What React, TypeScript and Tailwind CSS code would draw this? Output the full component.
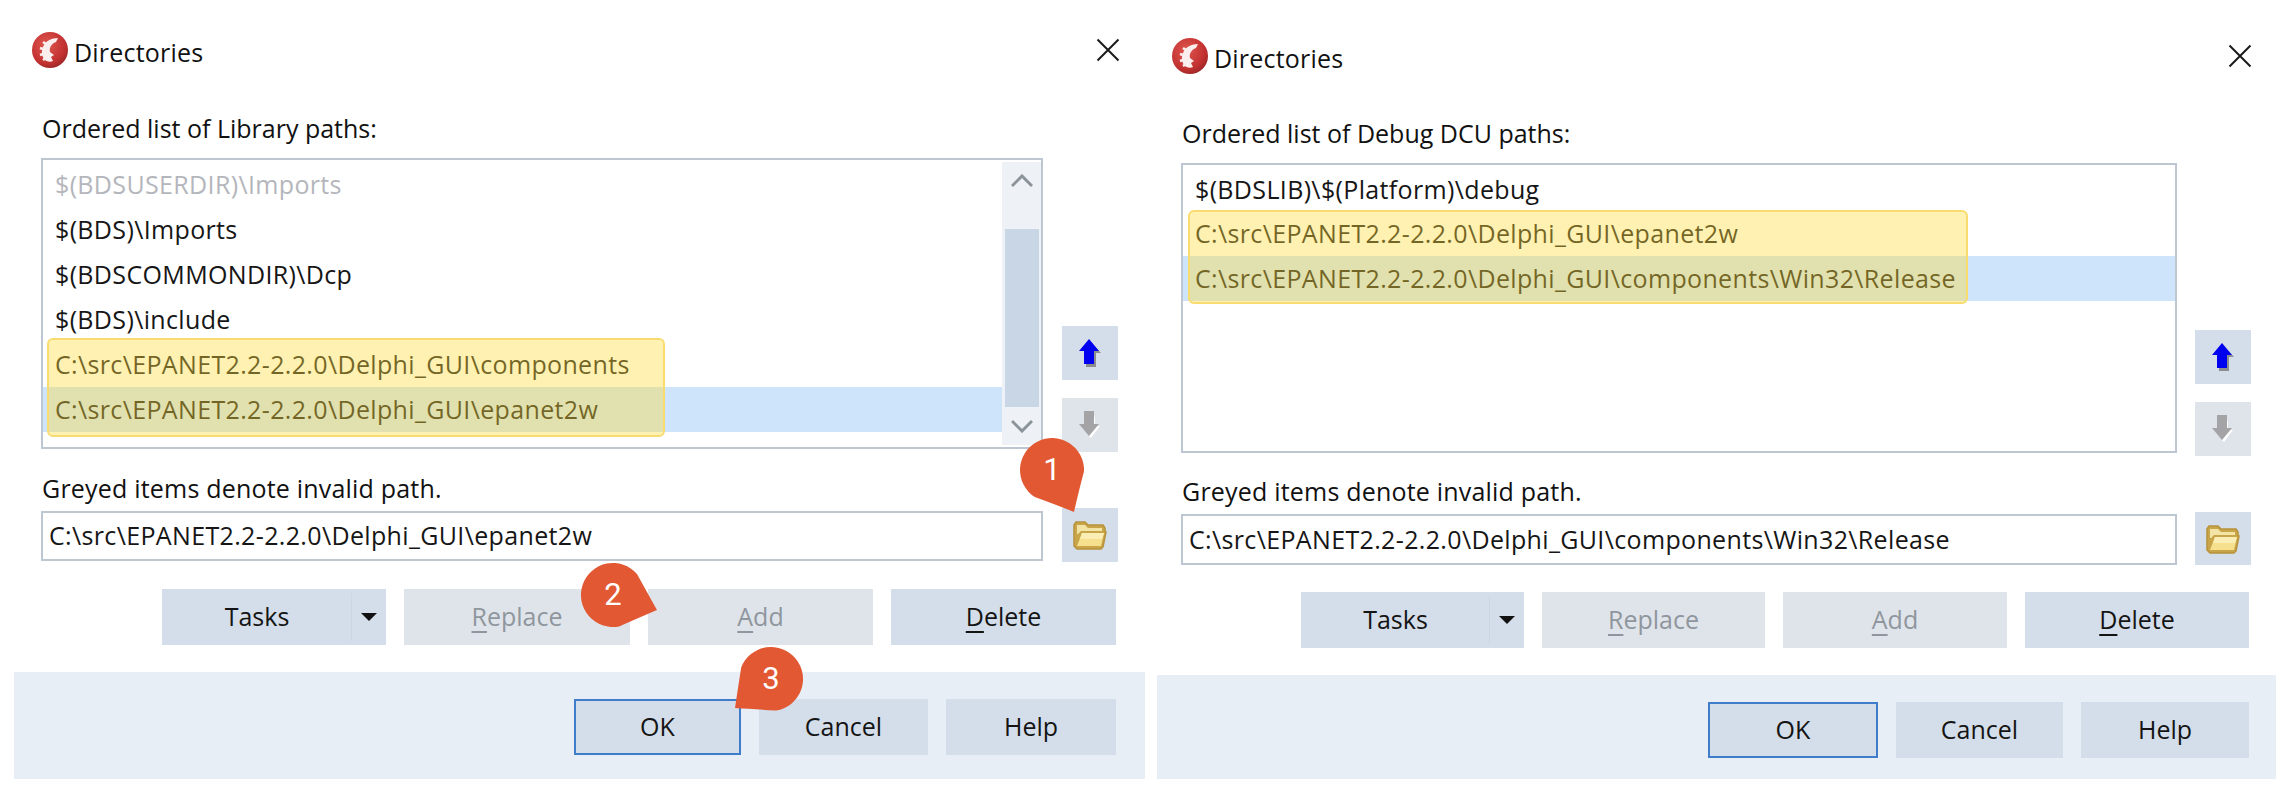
import type { ReactNode } from "react";

const FONT = "font-['Open_Sans','Liberation_Sans',sans-serif]";

// Spartan helmet logo, roughly
function Logo() {
  return (
    <svg width="36" height="36" viewBox="0 0 36 36">
      <defs>
        <radialGradient id="helmetBg" cx="0.4" cy="0.35" r="0.75">
          <stop offset="0" stopColor="#e0564f" />
          <stop offset="0.7" stopColor="#c0302f" />
          <stop offset="1" stopColor="#8e2226" />
        </radialGradient>
      </defs>
      <circle cx="18" cy="18" r="18" fill="url(#helmetBg)" />
      <path
        d="M26 6 C20 6 13 9 11 15 C9 20 10 25 13 28 C15 30 19 30 21 29 L19 25 L22 23 L18 20 C17 16 19 12 24 10 Z"
        fill="#fbeeee"
      />
      <path d="M14 12 L11 10 M11 17 L8 16 M11 22 L8 23 M14 26 L11 28" stroke="#fbeeee" strokeWidth="2.5" />
    </svg>
  );
}

function CloseIcon() {
  return (
    <svg width="24" height="24" viewBox="0 0 24 24" stroke="#1a1a1a" strokeWidth="2">
      <path d="M1.5 1.5 L22.5 22.5 M22.5 1.5 L1.5 22.5" />
    </svg>
  );
}

function Chevron({ down }: { down?: boolean }) {
  return (
    <svg width="22" height="14" viewBox="0 0 22 14" fill="none" stroke="#8b939b" strokeWidth="3">
      <path d={down ? "M1 2 L11 12 L21 2" : "M1 12 L11 2 L21 12"} />
    </svg>
  );
}

function ArrowUp() {
  return (
    <svg width="24" height="28" viewBox="0 0 24 28">
      <path d="M13 3 L23 14 L18 14 L18 28 L8 28 L8 14 Z" fill="#8d8d8d" />
      <path d="M11 0 L21 12 L16 12 L16 25 L6 25 L6 12 L1 12 Z" fill="#0000f0" />
    </svg>
  );
}

function ArrowDown() {
  return (
    <svg width="24" height="28" viewBox="0 0 24 28">
      <path d="M17 4 L17 15 L22 15 L13 27 L11 25 Z" fill="#ffffff" />
      <path d="M6 0 L16 0 L16 13 L21 13 L11 25 L1 13 L6 13 Z" fill="#a4a4a6" />
    </svg>
  );
}

function FolderIcon() {
  return (
    <svg width="34" height="30" viewBox="0 0 34 30">
      <path
        d="M1 5 L3 2 L12 2 L15 5 L30 5 L32 8 L32 11 L33 12 L30 27 L28 29 L4 29 L1 26 Z"
        fill="#c9a54a"
        stroke="#b8923a"
        strokeWidth="1.5"
      />
      <path d="M4 5 L12 5 L15 8 L29 8 L29 11 L8 11 L5 14 L4 14 Z" fill="#f3e3a4" />
      <path d="M9 13 L31 13 L28 26 L4 26 Z" fill="#f6e08e" />
      <path d="M9 13 L31 13 L29 19 L7 19 Z" fill="#fbeeb4" />
    </svg>
  );
}

function Caret() {
  return (
    <svg width="16" height="8" viewBox="0 0 16 8" className="block">
      <path d="M0 0 L16 0 L8 8 Z" fill="#111" />
    </svg>
  );
}

// Callout marker, tail computed from the direction of the tip
function Badge({
  n,
  tipX,
  tipY,
  className,
}: {
  n: number;
  tipX: number;
  tipY: number;
  className: string;
}) {
  const r = 32;
  const cx = 48;
  const cy = 48;
  const a = Math.atan2(tipY, tipX);
  const pt = (ang: number, rad: number) =>
    `${(cx + Math.cos(ang) * rad).toFixed(1)} ${(cy + Math.sin(ang) * rad).toFixed(1)}`;
  const d = `M${pt(a + 1.05, r)} A${r} ${r} 0 1 1 ${pt(a - 1.05, r)} Q${pt(a - 0.32, r * 1.12)} ${cx + tipX} ${cy + tipY} Q${pt(a + 0.32, r * 1.12)} ${pt(a + 1.05, r)} Z`;
  return (
    <div className={`absolute h-[96px] w-[96px] ${className}`}>
      <svg width="96" height="96" viewBox="0 0 96 96" className="absolute inset-0">
        <path d={d} fill="#e25833" />
      </svg>
      <span className="absolute left-[16px] top-[16px] flex h-[64px] w-[64px] items-center justify-center font-['Roboto',sans-serif] text-[31px] text-white">
        {n}
      </span>
    </div>
  );
}

function Btn({
  className,
  disabled,
  children,
}: {
  className: string;
  disabled?: boolean;
  children: ReactNode;
}) {
  return (
    <div
      className={`flex h-[56px] items-center justify-center text-[25px] ${
        disabled ? "bg-[#dfe4ea] text-[#8f969e]" : "bg-[#d4deea] text-[#141414]"
      } ${className}`}
    >
      {children}
    </div>
  );
}

interface DialogConfig {
  root: string;
  titleRow: string;
  labelMt: string;
  bodyRow: string;
  listBox: string;
  rowH: string;
  side: string;
  greyMt: string;
  inputRow: string;
  inputBox: string;
  folderBtn: string;
  actions: string;
  footer: string;
  widths: string[];
  footWidths: string[];
  label: string;
  rows: { text: string; grey?: boolean; selected?: boolean }[];
  highlight: string;
  scrollbar?: boolean;
  inputValue: string;
}

const LEFT: DialogConfig = {
  root: "w-[1131px] pt-[32px]",
  titleRow: "pl-[18px] pr-[25px]",
  labelMt: "mt-[44px] pl-[28px]",
  bodyRow: "mt-[14px] h-[294px] gap-[19px] pl-[27px]",
  listBox: "h-[291px] w-[1002px] pt-[2px]",
  rowH: "h-[45px]",
  side: "pt-[168px]",
  greyMt: "mt-[20px] pl-[28px]",
  inputRow: "mt-[4px] h-[54px] gap-[19px] pl-[27px]",
  inputBox: "mt-[3px] h-[50px] w-[1002px]",
  folderBtn: "h-[54px]",
  actions: "pr-[29px]",
  footer: "h-[107px] pr-[29px]",
  widths: ["w-[224px]", "w-[226px]", "w-[225px]", "w-[225px]"],
  footWidths: ["w-[167px]", "w-[169px]", "w-[170px]"],
  label: "Ordered list of Library paths:",
  rows: [
    { text: "$(BDSUSERDIR)\\Imports", grey: true },
    { text: "$(BDS)\\Imports" },
    { text: "$(BDSCOMMONDIR)\\Dcp" },
    { text: "$(BDS)\\include" },
    { text: "C:\\src\\EPANET2.2-2.2.0\\Delphi_GUI\\components" },
    { text: "C:\\src\\EPANET2.2-2.2.0\\Delphi_GUI\\epanet2w", selected: true },
  ],
  highlight: "left-[4px] top-[178px] h-[99px] w-[618px]",
  scrollbar: true,
  inputValue: "C:\\src\\EPANET2.2-2.2.0\\Delphi_GUI\\epanet2w",
};

const RIGHT: DialogConfig = {
  root: "w-[1119px] pt-[38px]",
  titleRow: "pl-[15px] pr-[24px]",
  labelMt: "mt-[43px] pl-[25px]",
  bodyRow: "mt-[14px] h-[293px] gap-[18px] pl-[24px]",
  listBox: "h-[290px] w-[996px] pt-[2px]",
  rowH: "h-[44.5px]",
  side: "pt-[167px]",
  greyMt: "mt-[19px] pl-[25px]",
  inputRow: "mt-[5px] h-[53px] gap-[18px] pl-[24px]",
  inputBox: "mt-[2px] h-[51px] w-[996px]",
  folderBtn: "h-[53px]",
  actions: "pr-[27px]",
  footer: "h-[104px] pr-[27px]",
  widths: ["w-[223px]", "w-[223px]", "w-[224px]", "w-[224px]"],
  footWidths: ["w-[170px]", "w-[167px]", "w-[168px]"],
  label: "Ordered list of Debug DCU paths:",
  rows: [
    { text: "$(BDSLIB)\\$(Platform)\\debug" },
    { text: "C:\\src\\EPANET2.2-2.2.0\\Delphi_GUI\\epanet2w" },
    { text: "C:\\src\\EPANET2.2-2.2.0\\Delphi_GUI\\components\\Win32\\Release", selected: true },
  ],
  highlight: "left-[5px] top-[45px] h-[94px] w-[780px]",
  inputValue: "C:\\src\\EPANET2.2-2.2.0\\Delphi_GUI\\components\\Win32\\Release",
};

function Dialog({ cfg, children }: { cfg: DialogConfig; children?: ReactNode }) {
  return (
    <div className={`relative shrink-0 ${cfg.root}`}>
      <div className={`flex h-[36px] items-center justify-between ${cfg.titleRow}`}>
        <div className="flex items-center gap-[6px]">
          <Logo />
          <span className="pt-[5px] text-[25px] tracking-[0.2px] text-[#111]">Directories</span>
        </div>
        <CloseIcon />
      </div>

      <div className={`h-[32px] text-[25px] leading-[32px] text-[#111] ${cfg.labelMt}`}>{cfg.label}</div>

      <div className={`flex items-start ${cfg.bodyRow}`}>
        {/* path list */}
        <div className={`relative flex border-2 border-[#bcc7d2] bg-white ${cfg.listBox}`}>
          <div className="min-w-0 flex-1">
            {cfg.rows.map((row) => (
              <div
                key={row.text}
                className={`flex items-center pl-[12px] text-[25px] tracking-[0.35px] ${cfg.rowH} ${
                  row.selected ? "bg-[#cde4fb]" : ""
                } ${row.grey ? "text-[#b4b6bc]" : "text-[#161616]"}`}
              >
                {row.text}
              </div>
            ))}
          </div>
          {cfg.scrollbar && (
            <div className="flex h-[283px] w-[39px] flex-col items-center bg-[#eef2f6]">
              <div className="flex h-[67px] w-full items-start justify-center pt-[12px]">
                <Chevron />
              </div>
              <div className="h-[178px] w-[34px] bg-[#c8d6e5]" />
              <div className="flex flex-1 items-center justify-center">
                <Chevron down />
              </div>
            </div>
          )}
          <div
            className={`absolute rounded-[6px] border-2 border-[#f9dc6f] bg-[#ffdc3c]/40 ${cfg.highlight}`}
          />
        </div>

        <div className={`flex flex-col gap-[18px] ${cfg.side}`}>
          <div className="flex h-[54px] w-[56px] items-center justify-center bg-[#d4deea]">
            <ArrowUp />
          </div>
          <div className="flex h-[54px] w-[56px] items-center justify-center bg-[#dfe4ea]">
            <ArrowDown />
          </div>
        </div>
      </div>

      <div className={`h-[32px] text-[25px] leading-[32px] tracking-[0.2px] text-[#111] ${cfg.greyMt}`}>
        Greyed items denote invalid path.
      </div>

      <div className={`flex items-start ${cfg.inputRow}`}>
        <div
          className={`flex items-center border-2 border-[#bcc7d2] bg-white pl-[6px] text-[25px] tracking-[0.35px] text-[#161616] ${cfg.inputBox}`}
        >
          {cfg.inputValue}
        </div>
        <div className={`flex w-[56px] items-center justify-center bg-[#d4deea] ${cfg.folderBtn}`}>
          <FolderIcon />
        </div>
      </div>

      <div className={`mt-[27px] flex justify-end gap-[18px] ${cfg.actions}`}>
        <Btn className={`relative ${cfg.widths[0]}`}>
          <span className="mr-[34px]">Tasks</span>
          {/* split part of the button */}
          <span className="absolute bottom-[4px] right-0 top-[4px] flex w-[35px] items-center justify-center border-l border-[#cbd6e3]">
            <Caret />
          </span>
        </Btn>
        <Btn disabled className={cfg.widths[1]}>
          <span>
            <span className="underline underline-offset-[5px]">R</span>eplace
          </span>
        </Btn>
        <Btn disabled className={cfg.widths[2]}>
          <span>
            <span className="underline underline-offset-[5px]">A</span>dd
          </span>
        </Btn>
        <Btn className={cfg.widths[3]}>
          <span>
            <span className="underline underline-offset-[5px]">D</span>elete
          </span>
        </Btn>
      </div>

      <div className={`mt-[27px] flex justify-end gap-[18px] bg-[#e8eef5] pt-[27px] ${cfg.footer}`}>
        <Btn className={`border-2 border-[#3f7cc9] ${cfg.footWidths[0]}`}>OK</Btn>
        <Btn className={cfg.footWidths[1]}>Cancel</Btn>
        <Btn className={cfg.footWidths[2]}>Help</Btn>
      </div>

      {children}
    </div>
  );
}

export default function App() {
  return (
    <div className={`flex h-[798px] w-[2290px] gap-[12px] overflow-hidden bg-white pl-[14px] ${FONT}`}>
      <Dialog cfg={LEFT}>
        <Badge n={1} tipX={22} tipY={42} className="left-[990px] top-[422px]" />
        <Badge n={2} tipX={44} tipY={15} className="left-[551px] top-[547px]" />
        <Badge n={3} tipX={-36} tipY={29} className="left-[709px] top-[631px]" />
      </Dialog>
      <Dialog cfg={RIGHT} />
    </div>
  );
}
